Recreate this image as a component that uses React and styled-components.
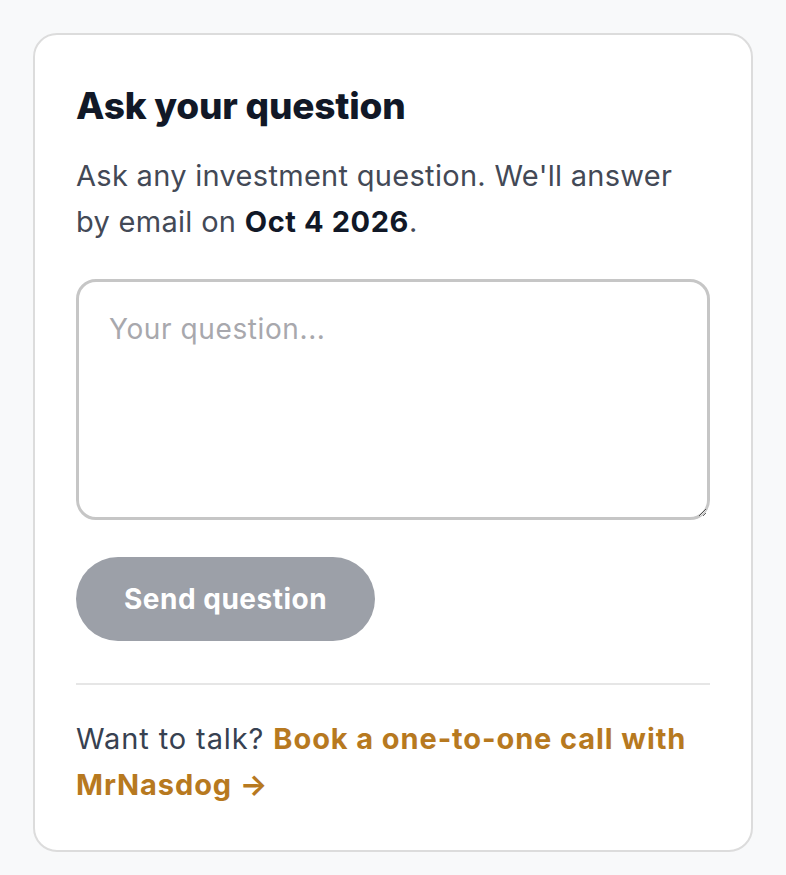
import styled, { createGlobalStyle } from 'styled-components'

const GlobalStyle = createGlobalStyle`
  html, body {
    margin: 0;
    padding: 0;
    background: #f8f9fa;
  }
  body {
    font-family: Inter, "Noto Sans", sans-serif;
  }
`

const App = () => {
    return (
        <Page>
            <GlobalStyle />
            <Card>
                <Title>Ask your question</Title>
                <Intro>
                    Ask any investment question. We'll answer by email on <strong>Oct 4 2026</strong>.
                </Intro>
                <Question placeholder="Your question..." />
                <SendButton disabled>Send question</SendButton>
                <Divider />
                <Footer>
                    Want to talk? <BookLink href="#">Book a one-to-one call with MrNasdog →</BookLink>
                </Footer>
            </Card>
        </Page>
    )
}

export default App

const Page = styled.div`
padding: 33px 33px 24px;
`

const Card = styled.div`
background: #fff;
border: 2px solid #dcdcdc;
border-radius: 24px;
padding: 49px 41px 42px;
display: flex;
flex-direction: column;
`

const Title = styled.h2`
margin: 0;
font-size: 37px;
line-height: 44px;
font-weight: 800;
letter-spacing: -0.2px;
color: #111827;
`

const Intro = styled.p`
margin: 25px 0 0;
font-size: 29px;
line-height: 46px;
letter-spacing: 0.3px;
color: #434956;

strong {
  font-weight: 700;
  letter-spacing: 0.6px;
  color: #111827;
}
`

const Question = styled.textarea`
margin-top: 34px;
height: 241px;
box-sizing: border-box;
width: 100%;
padding: 30px 30px;
border: 3px solid #c6c6c6;
border-radius: 20px;
font-family: Inter, sans-serif;
font-size: 28px;
letter-spacing: 0.6px;
color: #111827;
resize: vertical;
outline: none;

&::placeholder {
  color: #a8a8ad;
}
`

const SendButton = styled.button`
margin-top: 37px;
align-self: flex-start;
height: 84px;
padding: 0 48px;
border: none;
border-radius: 42px;
background: #9ca0a8;
color: #fff;
font-family: Inter, sans-serif;
font-size: 28px;
font-weight: 700;
letter-spacing: 0.5px;
cursor: default;
`

const Divider = styled.hr`
margin: 42px 0 0;
border: none;
border-top: 2px solid #e6e6e6;
`

const Footer = styled.p`
margin: 31px 0 0;
font-size: 29px;
line-height: 46px;
letter-spacing: 0.9px;
color: #374151;
`

const BookLink = styled.a`
color: #b7791f;
font-weight: 700;
text-decoration: none;
`
